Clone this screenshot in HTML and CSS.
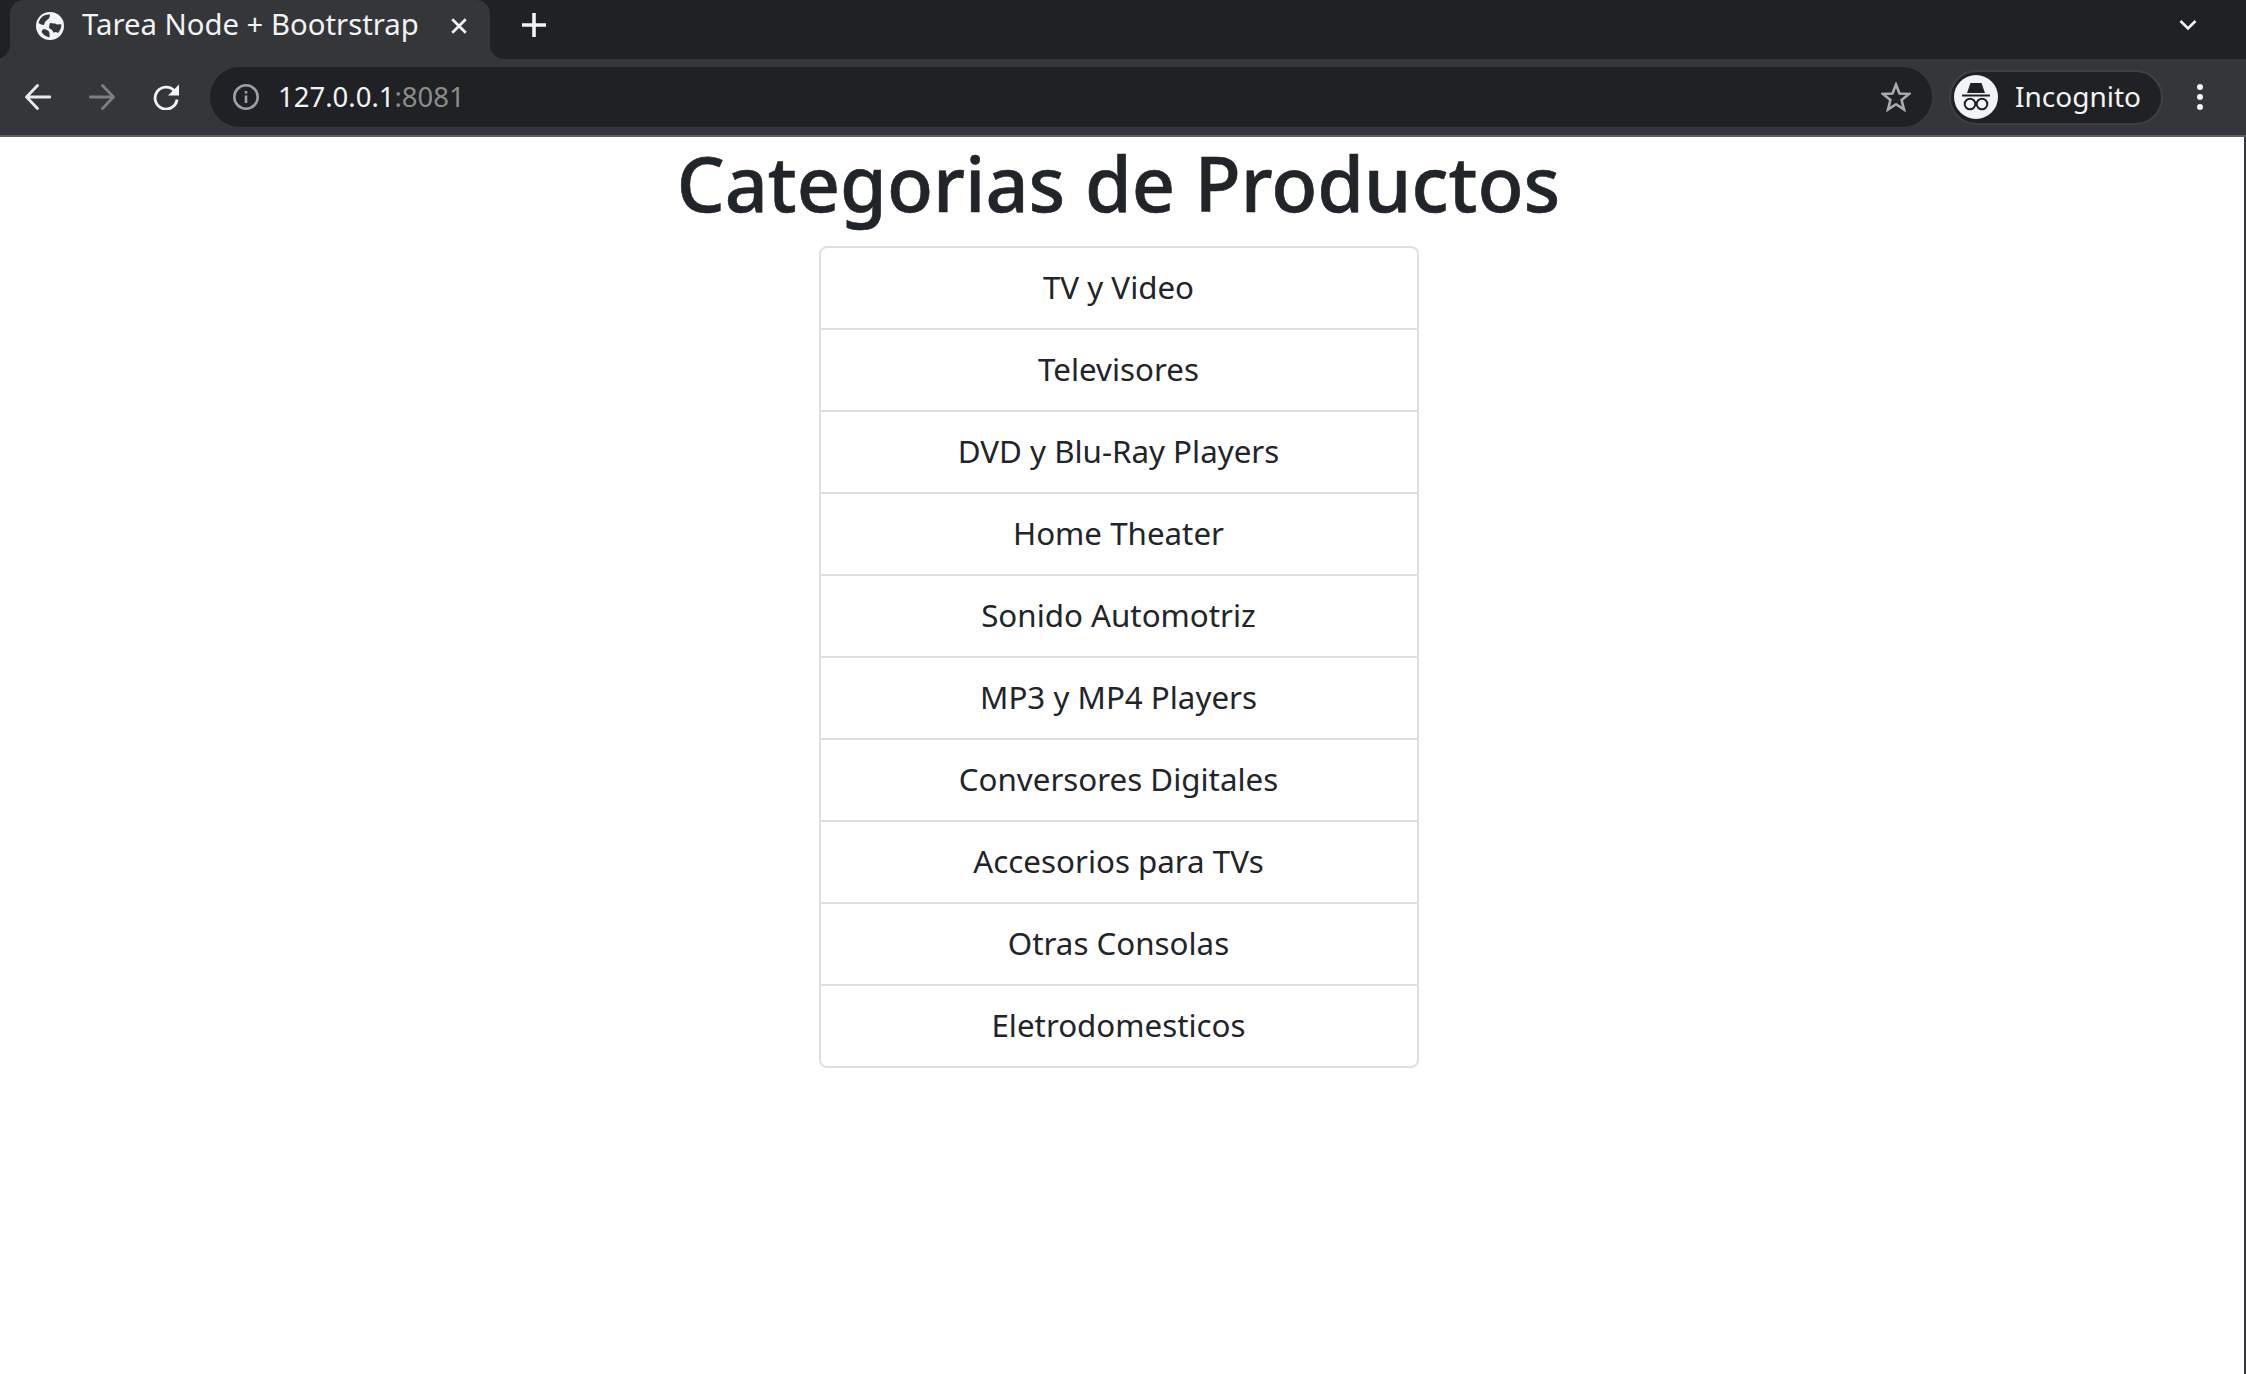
FILE: index.html
```html
<!DOCTYPE html>
<html lang="en">
<head>
    <meta charset="UTF-8">
    <title>Tarea Node + Bootrstrap</title>
    <link rel="stylesheet" href="styles.css">
</head>
<body>
    <div class="tab-strip">
        <div class="tab">
            <svg class="favicon" viewBox="0 0 28 28"><circle cx="14" cy="14" r="14" fill="#f1f3f4"/><path d="M7 4 Q10 2 14 2.500 Q14 6 11 8 Q8 10 8 13 Q5 13 2.500 11 Q3.500 6.500 7 4 Z M14 11 Q19 11 21 12.500 Q24 12 25.500 12.500 Q25 18 22 21 Q19 19 18 21 Q16 17 13 16 Q13 13 14 11 Z M7.500 17 Q11 17 13 19.500 Q14 22 13.500 25.500 Q8 24 5.500 20 Q6 18 7.500 17 Z" fill="#35363a"/></svg>
            <span class="tab-title">Tarea Node + Bootrstrap</span>
            <svg class="tab-close" viewBox="0 0 16 16"><path d="M2 2 L14 14 M14 2 L2 14" stroke="#f1f3f4" stroke-width="2.400" fill="none"/></svg>
        </div>
        <svg class="new-tab" viewBox="0 0 24 24"><path d="M12 0 V24 M0 12 H24" stroke="#f1f3f4" stroke-width="3.600" fill="none"/></svg>
        <svg class="tab-search" viewBox="0 0 18 12"><path d="M1.500 2 L9 9.500 L16.500 2" stroke="#f1f3f4" stroke-width="2.600" fill="none"/></svg>
    </div>
    <div class="toolbar">
        <svg class="nav-icon" viewBox="0 0 26 26"><path d="M25 13 H2 M12.500 1.500 L1.500 13 L12.500 24.500" stroke="#e8eaed" stroke-width="2.800" stroke-linecap="round" stroke-linejoin="round" fill="none"/></svg>
        <svg class="nav-icon" viewBox="0 0 26 26"><path d="M1 13 H24 M13.500 1.500 L24.500 13 L13.500 24.500" stroke="#7c7e81" stroke-width="2.800" stroke-linecap="round" stroke-linejoin="round" fill="none"/></svg>
        <svg class="nav-icon" viewBox="0 0 26 26"><path d="M21.500 7 A11 11 0 1 0 24 15.500" stroke="#f1f3f4" stroke-width="2.800" fill="none"/><path d="M26 0.500 V11.500 H15 Z" fill="#f1f3f4"/></svg>
        <div class="omnibox">
            <svg class="info" viewBox="0 0 26 26"><circle cx="13" cy="13" r="11.700" stroke="#9aa0a6" stroke-width="2.600" fill="none"/><path d="M13 11.500 V19 M13 7 V9.500" stroke="#9aa0a6" stroke-width="2.600" fill="none"/></svg>
            <span class="url">127.0.0.1<span class="url-port">:8081</span></span>
            <svg class="star" viewBox="0 0 30 30"><path d="M15 2.500 L18.500 11.500 L28 12 L20.600 18 L23 27.500 L15 22.200 L7 27.500 L9.400 18 L2 12 L11.500 11.500 Z" stroke="#a9abae" stroke-width="2.600" fill="none"/></svg>
        </div>
        <div class="profile">
            <span class="avatar">
                <svg viewBox="0 0 44 44"><path d="M16.500 8 H27.500 L31 18 H13 Z" fill="#202124"/><path d="M8 20.500 H36" stroke="#202124" stroke-width="2"/><circle cx="16" cy="29" r="5.300" stroke="#202124" stroke-width="2" fill="none"/><circle cx="28" cy="29" r="5.300" stroke="#202124" stroke-width="2" fill="none"/></svg>
            </span>
            <span class="profile-name">Incognito</span>
        </div>
        <div class="menu-dots"><i></i><i></i><i></i></div>
    </div>
    <main class="page">
        <h1 class="title">Categorias de Productos</h1>
        <ul class="category-list">
            <li>TV y Video</li>
            <li>Televisores</li>
            <li>DVD y Blu-Ray Players</li>
            <li>Home Theater</li>
            <li>Sonido Automotriz</li>
            <li>MP3 y MP4 Players</li>
            <li>Conversores Digitales</li>
            <li>Accesorios para TVs</li>
            <li>Otras Consolas</li>
            <li>Eletrodomesticos</li>
        </ul>
    </main>
</body>
</html>
```
FILE: styles.css
```css
html, body {
    height: 100%;
}
body {
    margin: 0;
    display: flex;
    flex-direction: column;
    background: #fff;
    color: #212529;
    font-family: "Noto Sans", "Open Sans", sans-serif;
    overflow: hidden;
}
.tab-strip {
    height: 59px;
    background: #202124;
    display: flex;
    align-items: center;
    padding-left: 10px;
    flex-shrink: 0;
}
.tab {
    position: relative;
    width: 480px;
    height: 59px;
    padding: 0 22px 7px 26px;
    box-sizing: border-box;
    background: #35363a;
    border-radius: 14px 14px 0 0;
    display: flex;
    align-items: center;
}
/* curved feet of the active tab */
.tab::before,
.tab::after {
    content: "";
    position: absolute;
    bottom: 0;
    width: 14px;
    height: 14px;
}
.tab::before {
    left: -14px;
    background: radial-gradient(circle at 0 0, transparent 13.5px, #35363a 14.500px);
}
.tab::after {
    right: -14px;
    background: radial-gradient(circle at 100% 0, transparent 13.5px, #35363a 14.500px);
}
.favicon {
    width: 28px;
    height: 28px;
    margin-right: 18px;
    flex-shrink: 0;
}
.tab-title {
    color: #f1f3f4;
    font-size: 29.300px;
    flex: 1;
    white-space: nowrap;
    padding-bottom: 4px;
}
.tab-close {
    width: 18px;
    height: 18px;
    margin-bottom: 1px;
}
.new-tab {
    width: 24px;
    height: 24px;
    margin-left: 32px;
    margin-bottom: 9px;
}
.tab-search {
    width: 18px;
    height: 12px;
    margin-left: auto;
    margin-right: 49px;
    margin-bottom: 9px;
}
.toolbar {
    height: 76px;
    background: #35363a;
    border-bottom: 2px solid #5f6064;
    display: flex;
    align-items: center;
    padding-left: 25px;
    flex-shrink: 0;
}
.nav-icon {
    width: 26px;
    height: 26px;
    margin-right: 38px;
    flex-shrink: 0;
}
.omnibox {
    width: 1722px;
    height: 60px;
    margin-left: -7px;
    background: #202124;
    border-radius: 30px;
    display: flex;
    align-items: center;
    padding: 0 21px 0 23px;
    box-sizing: border-box;
}
.info {
    width: 26px;
    height: 26px;
    margin-right: 19px;
}
.url {
    color: #f1f3f4;
    font-size: 27.500px;
    flex: 1;
    padding-bottom: 1px;
}
.url-port {
    color: #8a8c8f;
}
.star {
    width: 30px;
    height: 30px;
}
.profile {
    width: 214px;
    height: 55px;
    margin-left: 17px;
    padding-left: 3px;
    box-sizing: border-box;
    background: #202124;
    border: 2px solid #3f4044;
    border-radius: 28px;
    display: flex;
    align-items: center;
}
.avatar {
    width: 44px;
    height: 44px;
    border-radius: 50%;
    background: #f1f3f4;
    display: flex;
}
.avatar svg {
    width: 44px;
    height: 44px;
}
.profile-name {
    color: #f1f3f4;
    font-size: 28px;
    margin-left: 17px;
    padding-bottom: 2px;
}
.menu-dots {
    display: flex;
    flex-direction: column;
    gap: 4px;
    margin-left: 34px;
}
.menu-dots i {
    width: 6px;
    height: 6px;
    border-radius: 50%;
    background: #f1f3f4;
}
.page {
    flex: 1;
    display: flex;
    flex-direction: column;
    align-items: center;
    padding-right: 7px;
    border-right: 2px solid #35363a;
}
.title {
    margin: 0 0 17px;
    font-size: 75.500px;
    font-weight: 500;
    line-height: 92px;
    -webkit-text-stroke: 0.6px #212529;
}
.category-list {
    list-style: none;
    margin: 0;
    padding: 0;
    width: 600px;
    box-sizing: border-box;
    border: 2px solid #dfdfdf;
    border-radius: 8px;
}
.category-list li {
    height: 80px;
    line-height: 78px;
    text-align: center;
    font-size: 31.300px;
    border-bottom: 2px solid #dfdfdf;
}
.category-list li:last-child {
    border-bottom: none;
}
```
